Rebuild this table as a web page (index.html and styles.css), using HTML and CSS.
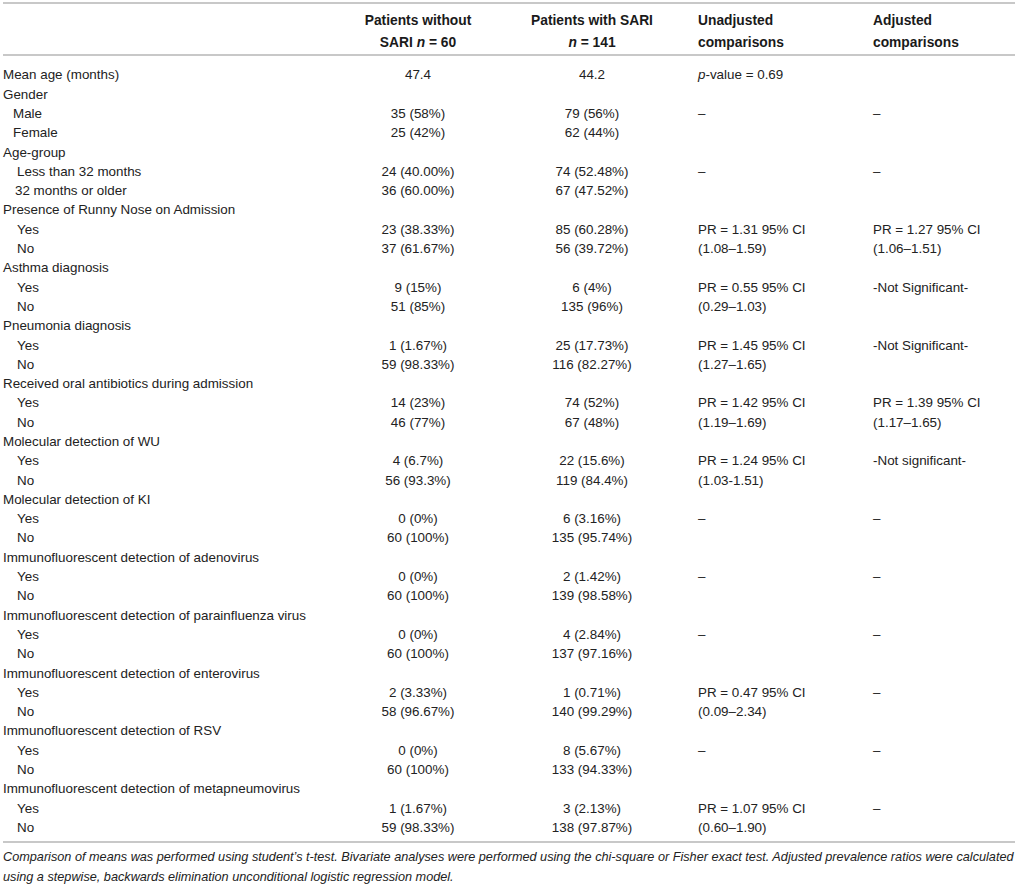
FILE: index.html
```html
<!DOCTYPE html>
<html lang="en">
<head>
<meta charset="utf-8">
<title>Table</title>
<link rel="stylesheet" href="styles.css">
</head>
<body>
<div class="page">
<table class="data">
  <colgroup>
    <col class="c1"><col class="c2"><col class="c3"><col class="c4"><col class="c5">
  </colgroup>
  <thead>
    <tr>
      <th class="lbl"></th>
      <th class="ctr">Patients without<br>SARI <i>n</i> = 60</th>
      <th class="ctr">Patients with SARI<br><i>n</i> = 141</th>
      <th class="lft">Unadjusted<br>comparisons</th>
      <th class="lft">Adjusted<br>comparisons</th>
    </tr>
  </thead>
  <tbody>
    <tr class="first"><td class="lbl">Mean age (months)</td><td class="ctr">47.4</td><td class="ctr">44.2</td><td><i>p</i>-value = 0.69</td><td></td></tr>
    <tr><td class="lbl">Gender</td><td></td><td></td><td></td><td></td></tr>
    <tr><td class="lbl sub narrow">Male</td><td class="ctr">35 (58%)</td><td class="ctr">79 (56%)</td><td>–</td><td>–</td></tr>
    <tr><td class="lbl sub narrow">Female</td><td class="ctr">25 (42%)</td><td class="ctr">62 (44%)</td><td></td><td></td></tr>
    <tr><td class="lbl">Age-group</td><td></td><td></td><td></td><td></td></tr>
    <tr><td class="lbl sub">Less than 32 months</td><td class="ctr">24 (40.00%)</td><td class="ctr">74 (52.48%)</td><td>–</td><td>–</td></tr>
    <tr><td class="lbl sub mid">32 months or older</td><td class="ctr">36 (60.00%)</td><td class="ctr">67 (47.52%)</td><td></td><td></td></tr>
    <tr><td class="lbl">Presence of Runny Nose on Admission</td><td></td><td></td><td></td><td></td></tr>
    <tr><td class="lbl sub">Yes</td><td class="ctr">23 (38.33%)</td><td class="ctr">85 (60.28%)</td><td rowspan="2">PR = 1.31 95% CI<br>(1.08–1.59)</td><td rowspan="2">PR = 1.27 95% CI<br>(1.06–1.51)</td></tr>
    <tr><td class="lbl sub">No</td><td class="ctr">37 (61.67%)</td><td class="ctr">56 (39.72%)</td></tr>
    <tr><td class="lbl">Asthma diagnosis</td><td></td><td></td><td></td><td></td></tr>
    <tr><td class="lbl sub">Yes</td><td class="ctr">9 (15%)</td><td class="ctr">6 (4%)</td><td rowspan="2">PR = 0.55 95% CI<br>(0.29–1.03)</td><td rowspan="2">-Not Significant-</td></tr>
    <tr><td class="lbl sub">No</td><td class="ctr">51 (85%)</td><td class="ctr">135 (96%)</td></tr>
    <tr><td class="lbl">Pneumonia diagnosis</td><td></td><td></td><td></td><td></td></tr>
    <tr><td class="lbl sub">Yes</td><td class="ctr">1 (1.67%)</td><td class="ctr">25 (17.73%)</td><td rowspan="2">PR = 1.45 95% CI<br>(1.27–1.65)</td><td rowspan="2">-Not Significant-</td></tr>
    <tr><td class="lbl sub">No</td><td class="ctr">59 (98.33%)</td><td class="ctr">116 (82.27%)</td></tr>
    <tr><td class="lbl">Received oral antibiotics during admission</td><td></td><td></td><td></td><td></td></tr>
    <tr><td class="lbl sub">Yes</td><td class="ctr">14 (23%)</td><td class="ctr">74 (52%)</td><td rowspan="2">PR = 1.42 95% CI<br>(1.19–1.69)</td><td rowspan="2">PR = 1.39 95% CI<br>(1.17–1.65)</td></tr>
    <tr><td class="lbl sub">No</td><td class="ctr">46 (77%)</td><td class="ctr">67 (48%)</td></tr>
    <tr><td class="lbl">Molecular detection of WU</td><td></td><td></td><td></td><td></td></tr>
    <tr><td class="lbl sub">Yes</td><td class="ctr">4 (6.7%)</td><td class="ctr">22 (15.6%)</td><td rowspan="2">PR = 1.24 95% CI<br>(1.03-1.51)</td><td rowspan="2">-Not significant-</td></tr>
    <tr><td class="lbl sub">No</td><td class="ctr">56 (93.3%)</td><td class="ctr">119 (84.4%)</td></tr>
    <tr><td class="lbl">Molecular detection of KI</td><td></td><td></td><td></td><td></td></tr>
    <tr><td class="lbl sub">Yes</td><td class="ctr">0 (0%)</td><td class="ctr">6 (3.16%)</td><td>–</td><td>–</td></tr>
    <tr><td class="lbl sub">No</td><td class="ctr">60 (100%)</td><td class="ctr">135 (95.74%)</td><td></td><td></td></tr>
    <tr><td class="lbl">Immunofluorescent detection of adenovirus</td><td></td><td></td><td></td><td></td></tr>
    <tr><td class="lbl sub">Yes</td><td class="ctr">0 (0%)</td><td class="ctr">2 (1.42%)</td><td>–</td><td>–</td></tr>
    <tr><td class="lbl sub">No</td><td class="ctr">60 (100%)</td><td class="ctr">139 (98.58%)</td><td></td><td></td></tr>
    <tr><td class="lbl">Immunofluorescent detection of parainfluenza virus</td><td></td><td></td><td></td><td></td></tr>
    <tr><td class="lbl sub">Yes</td><td class="ctr">0 (0%)</td><td class="ctr">4 (2.84%)</td><td>–</td><td>–</td></tr>
    <tr><td class="lbl sub">No</td><td class="ctr">60 (100%)</td><td class="ctr">137 (97.16%)</td><td></td><td></td></tr>
    <tr><td class="lbl">Immunofluorescent detection of enterovirus</td><td></td><td></td><td></td><td></td></tr>
    <tr><td class="lbl sub">Yes</td><td class="ctr">2 (3.33%)</td><td class="ctr">1 (0.71%)</td><td rowspan="2">PR = 0.47 95% CI<br>(0.09–2.34)</td><td rowspan="2">–</td></tr>
    <tr><td class="lbl sub">No</td><td class="ctr">58 (96.67%)</td><td class="ctr">140 (99.29%)</td></tr>
    <tr><td class="lbl">Immunofluorescent detection of RSV</td><td></td><td></td><td></td><td></td></tr>
    <tr><td class="lbl sub">Yes</td><td class="ctr">0 (0%)</td><td class="ctr">8 (5.67%)</td><td>–</td><td>–</td></tr>
    <tr><td class="lbl sub">No</td><td class="ctr">60 (100%)</td><td class="ctr">133 (94.33%)</td><td></td><td></td></tr>
    <tr><td class="lbl">Immunofluorescent detection of metapneumovirus</td><td></td><td></td><td></td><td></td></tr>
    <tr><td class="lbl sub">Yes</td><td class="ctr">1 (1.67%)</td><td class="ctr">3 (2.13%)</td><td rowspan="2">PR = 1.07 95% CI<br>(0.60–1.90)</td><td rowspan="2">–</td></tr>
    <tr class="last"><td class="lbl sub">No</td><td class="ctr">59 (98.33%)</td><td class="ctr">138 (97.87%)</td></tr>
  </tbody>
</table>
<p class="note">Comparison of means was performed using student’s t-test. Bivariate analyses were performed using the chi-square or Fisher exact test. Adjusted prevalence ratios were calculated using a stepwise, backwards elimination unconditional logistic regression model.</p>
</div>
</body>
</html>
```
FILE: styles.css
```css
html, body {
  margin: 0;
  padding: 0;
  background: #ffffff;
}

.page {
  width: 1012px;
  padding: 2px 3px 0 3px;
  font-family: "Liberation Sans", Arial, Helvetica, sans-serif;
  color: #222222;
}

.data {
  width: 1012px;
  table-layout: fixed;
  border-collapse: separate;
  border-spacing: 0;
  font-size: 13.4px;
  line-height: 19.3px;
}

.c1 { width: 340px; }
.c2 { width: 150px; }
.c3 { width: 198px; }
.c4 { width: 175px; }
.c5 { width: 149px; }

.data th {
  font-weight: bold;
  font-size: 13.8px;
  line-height: 21.5px;
  padding: 6px 7px 1px 7px;
  border-top: 2px solid #c8c8c8;
  border-bottom: 2px solid #c8c8c8;
  vertical-align: top;
  color: #1a1a1a;
}

.data td {
  padding: 0 7px;
  vertical-align: top;
  text-align: left;
  white-space: nowrap;
}

.data th.lbl,
.data td.lbl {
  padding-left: 0;
}

.data td.sub {
  padding-left: 14px;
}

.data td.sub.narrow {
  padding-left: 10px;
}

.data td.sub.mid {
  padding-left: 12px;
}

.data .ctr { text-align: center; }
.data .lft { text-align: left; }

.data tr.first td {
  padding-top: 9.35px;
}

.data tr.last td,
.data tr:nth-last-child(2) td[rowspan] {
  padding-bottom: 3.35px;
  border-bottom: 2px solid #c8c8c8;
}

.note {
  margin: 4px 0 0 0;
  font-size: 12.7px;
  line-height: 20px;
  font-style: italic;
  color: #222222;
}
```
